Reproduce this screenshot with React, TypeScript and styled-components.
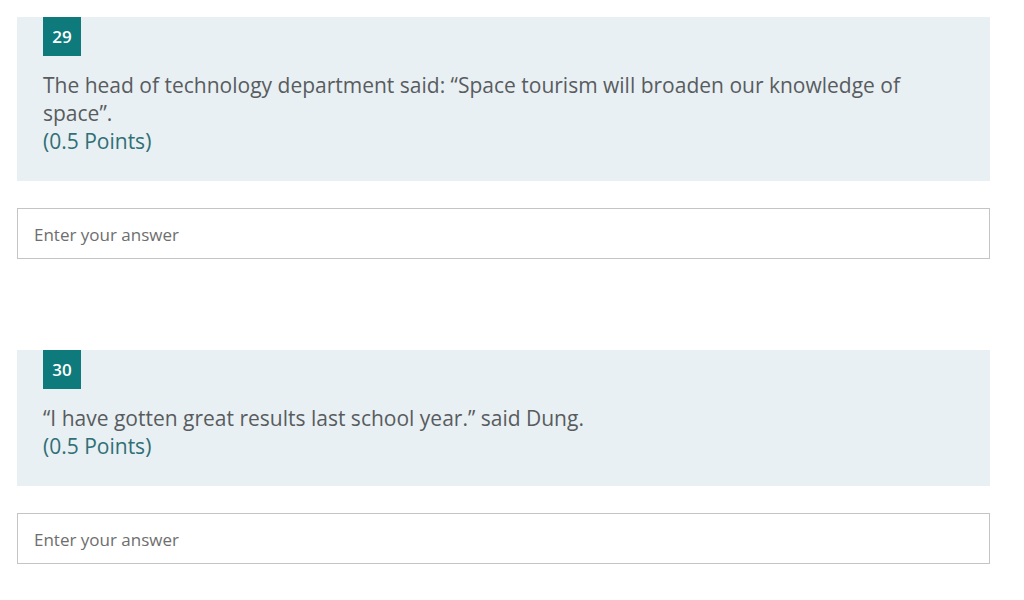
import styled, { createGlobalStyle } from 'styled-components';

const GlobalStyle = createGlobalStyle`
  body {
    margin: 0;
    background: #ffffff;
    font-family: "Open Sans", "Noto Sans", sans-serif;
  }
`;

const questions = [
  {
    no: 29,
    text: 'The head of technology department said: \u201cSpace tourism will broaden our knowledge of space\u201d.',
    points: 0.5,
  },
  {
    no: 30,
    text: '\u201cI have gotten great results last school year.\u201d said Dung.',
    points: 0.5,
  },
];

export default function App() {
  return (
    <>
      <GlobalStyle />
      <Page>
        {questions.map((q) => (
          <Question key={q.no}>
            <Card>
              <Badge>{q.no}</Badge>
              <Title>{q.text}</Title>
              <Points>({q.points} Points)</Points>
            </Card>
            <Answer placeholder="Enter your answer" />
          </Question>
        ))}
      </Page>
    </>
  );
}

const Page = styled.div`
  display: flex;
  flex-direction: column;
  gap: 91px;
  padding: 17px 34px 0 17px;
  width: 973px;
`;

const Question = styled.section`
  display: flex;
  flex-direction: column;
  gap: 27px;
`;

const Card = styled.div`
  background: #e9f0f3;
  padding: 0 26px 26px;
  display: flex;
  flex-direction: column;
  align-items: flex-start;
`;

const Badge = styled.div`
  width: 38px;
  height: 39px;
  background: #0e7a7b;
  color: #ffffff;
  font-size: 17px;
  font-weight: 600;
  display: flex;
  align-items: center;
  justify-content: center;
  margin-bottom: 15px;
`;

const Title = styled.div`
  font-size: 21px;
  line-height: 28px;
  color: #585c60;
  max-width: 900px;
`;

const Points = styled.div`
  font-size: 21px;
  line-height: 28px;
  color: #2f6f76;
`;

const Answer = styled.input`
  box-sizing: border-box;
  height: 51px;
  width: 100%;
  border: 1px solid #c4c4c4;
  padding: 2px 16px 0;
  font-family: inherit;
  font-size: 17px;
  color: #333;
  outline: none;

  &::placeholder {
    color: #6e6e6e;
  }
`;
